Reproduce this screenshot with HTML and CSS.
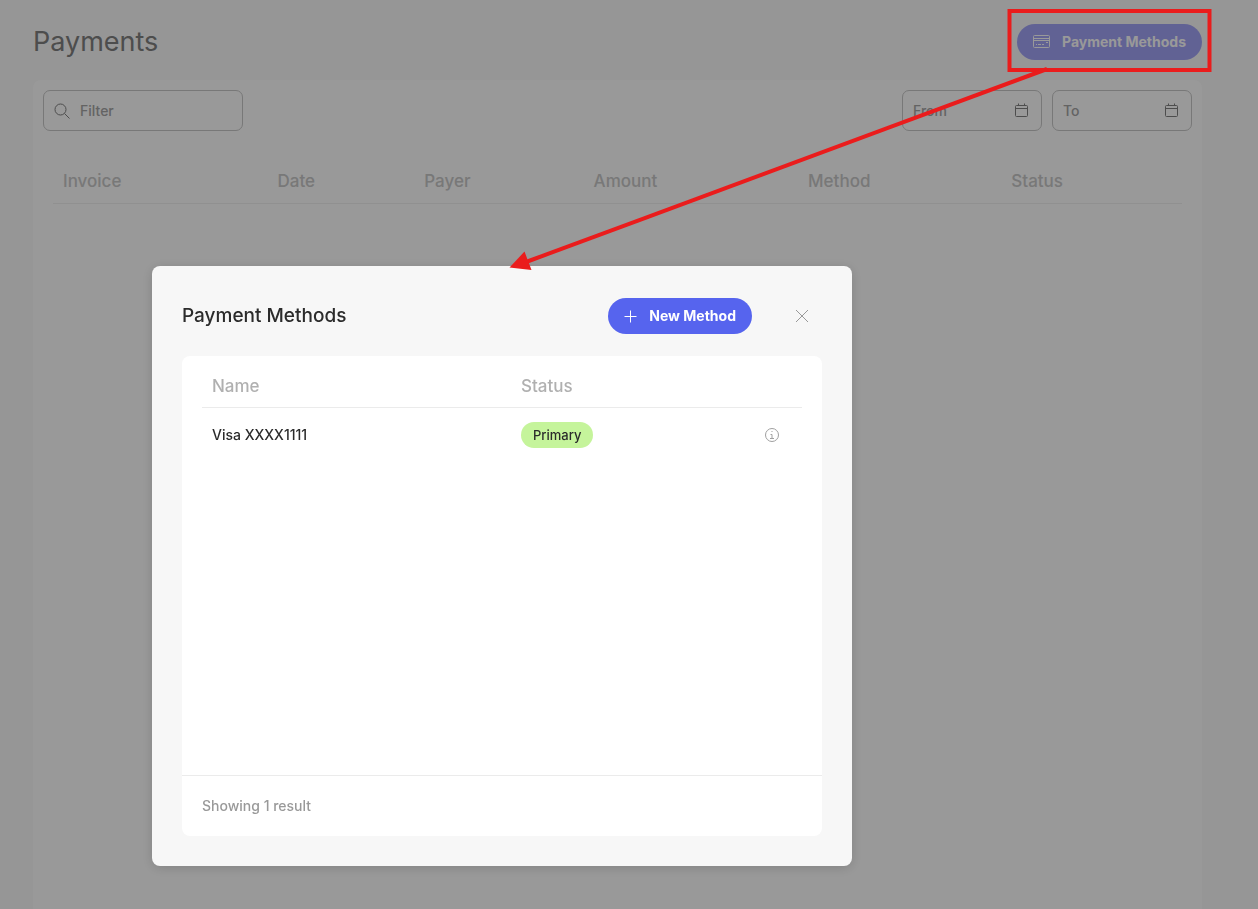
FILE: index.html
```html
<!DOCTYPE html>
<html lang="en">
  <head>
    <meta charset="utf-8">
    <meta name="viewport" content="width=device-width, initial-scale=1">
    <title>Payments</title>
    <link rel="stylesheet" href="styles.css">
  </head>
  <body>
    <main class="page">
      <header class="page-header">
        <h1>Payments</h1>
        <button type="button" class="btn btn-muted">
          <svg class="icon-card" viewBox="0 0 17 14" fill="none" stroke="currentColor">
            <rect x=".5" y=".5" width="16" height="12" rx="1" />
            <path d="M.5 3.500h16M.5 5.500h16M3 9.500h1M5 9.500h3M9 9.500h2M13 7.500h2" />
          </svg>
          Payment Methods
        </button>
      </header>

      <section class="card payments">
        <div class="filters">
          <label class="field field-search">
            <svg class="icon-search" viewBox="0 0 16 16" fill="none" stroke="currentColor">
              <circle cx="6.5" cy="6.5" r="5.5" />
              <path d="M10.5 10.5 15.5 15.5" />
            </svg>
            <input type="text" placeholder="Filter" aria-label="Filter">
          </label>
          <div class="dates">
            <label class="field field-date">
              <input type="text" placeholder="From" aria-label="From">
              <svg class="icon-calendar" viewBox="0 0 14 15" fill="none" stroke="currentColor">
                <rect x=".5" y="2.5" width="12" height="11" rx="1" />
                <path d="M.5 5.5h12M3.5 .5v2M9.500 .5v2" />
              </svg>
            </label>
            <label class="field field-date">
              <input type="text" placeholder="To" aria-label="To">
              <svg class="icon-calendar" viewBox="0 0 14 15" fill="none" stroke="currentColor">
                <rect x=".5" y="2.5" width="12" height="11" rx="1" />
                <path d="M.5 5.5h12M3.5 .5v2M9.500 .5v2" />
              </svg>
            </label>
          </div>
        </div>
        <div class="table-wrap">
          <table class="payments-table">
            <thead>
              <tr>
                <th class="col-invoice">Invoice</th>
                <th class="col-date">Date</th>
                <th class="col-payer">Payer</th>
                <th class="col-amount">Amount</th>
                <th class="col-method">Method</th>
                <th>Status</th>
              </tr>
            </thead>
          </table>
        </div>
      </section>
    </main>

    <!-- Modal -->
    <div class="overlay">
      <div class="modal" role="dialog" aria-labelledby="modal-title">
        <div class="modal-header">
          <h2 id="modal-title">Payment Methods</h2>
          <button type="button" class="btn btn-primary">
            <svg class="icon-plus" viewBox="0 0 13 13" fill="none" stroke="currentColor">
              <path d="M6.5 .5v12M.5 6.5h12" />
            </svg>
            New Method
          </button>
          <button type="button" class="btn-close" aria-label="Close">
            <svg viewBox="0 0 14 14" fill="none" stroke="currentColor">
              <path d="M1 1l12 12M13 1L1 13" />
            </svg>
          </button>
        </div>
        <div class="card methods">
          <table class="methods-table">
            <thead>
              <tr>
                <th class="col-name">Name</th>
                <th>Status</th>
                <th class="col-info"></th>
              </tr>
            </thead>
            <tbody>
              <tr>
                <td>Visa XXXX1111</td>
                <td><span class="badge">Primary</span></td>
                <td>
                  <button type="button" class="btn-info" aria-label="Info">
                    <svg viewBox="0 0 16 16" fill="none" stroke="currentColor">
                      <circle cx="8" cy="8" r="6.5" />
                      <path d="M6.5 7.5h1.5v4M6 11.5h4M7.5 4.5h1" />
                    </svg>
                  </button>
                </td>
              </tr>
            </tbody>
          </table>
          <footer class="methods-footer">Showing 1 result</footer>
        </div>
      </div>
    </div>

    <!-- Callout drawn over everything -->
    <svg class="callout" width="1258" height="300" viewBox="0 0 1258 300">
      <rect x="1009.5" y="11" width="200" height="59" fill="none" stroke="#ea1c1c" stroke-width="4" />
      <path d="M1047 69 526 262" stroke="#ea1c1c" stroke-width="4" />
      <path d="M509.5 267.500 524.5 251.5 531.5 270z" fill="#ea1c1c" />
    </svg>
  </body>
</html>
```
FILE: styles.css
```css
* {
  box-sizing: border-box;
}
html,
body {
  height: 100%;
}
body {
  margin: 0;
  background-color: #fafafa;
  color: #2b2b2b;
  font-family: Inter, "Liberation Sans", sans-serif;
  font-size: 14px;
  line-height: 20px;
  overflow: hidden;
}
h1,
h2 {
  margin: 0;
  font-weight: 400;
}
h1 {
  font-size: 27px;
  line-height: 36px;
  color: #808080;
}
h2 {
  flex: 1;
  font-size: 19px;
  line-height: 28px;
  font-weight: 500;
}
button,
input {
  font: inherit;
  color: inherit;
}
button {
  border: none;
  background: none;
  padding: 0;
  cursor: pointer;
}
svg {
  display: block;
}
.page {
  display: flex;
  flex-direction: column;
  min-height: 100%;
  padding: 24px 56px 0 33px;
}
.page-header {
  display: flex;
  justify-content: space-between;
  align-items: center;
  margin-bottom: 20px;
}
.card {
  background-color: #fff;
  border-radius: 8px;
}
.btn {
  display: flex;
  align-items: center;
  gap: 12px;
  height: 36px;
  padding: 0 16px;
  border-radius: 18px;
  color: #fff;
  font-size: 14px;
  font-weight: 700;
}
.btn-muted {
  background-color: #a2a3f7;
}
.btn-primary {
  background-color: #5664ee;
}
.icon-card {
  width: 17px;
  height: 14px;
}
.icon-plus {
  width: 13px;
  height: 13px;
}

/* Payments list */
.payments {
  flex: 1;
  padding: 10px;
  border-radius: 8px 8px 0 0;
}
.filters,
.dates {
  display: flex;
  justify-content: space-between;
  gap: 10px;
}
.field {
  display: flex;
  align-items: center;
  gap: 10px;
  height: 41px;
  padding: 0 10px;
  border: 1px solid #c8c8c8;
  border-radius: 7px;
  color: #808080;
}
.field-search {
  width: 200px;
}
.field-date {
  width: 140px;
  padding-right: 12px;
}
.field input {
  flex: 1;
  min-width: 0;
  padding: 0;
  border: none;
  outline: none;
  background: none;
  font-weight: 500;
}
.field input::placeholder {
  color: #a6a6a6;
  opacity: 1;
}
.icon-search {
  width: 16px;
  height: 16px;
}
.icon-calendar {
  width: 14px;
  height: 15px;
}
table {
  width: 100%;
  border-collapse: collapse;
  table-layout: fixed;
}
th,
td {
  padding: 0 10px;
  text-align: left;
}
th {
  border-bottom: 1px solid #ebebeb;
  color: #b0b0b0;
  font-size: 17px;
  font-weight: 500;
}
.table-wrap {
  padding: 28px 10px 0;
}
.payments-table th {
  height: 44px;
  border-color: #f0f0f0;
  color: #c8c8c8;
}
.col-invoice {
  width: 19%;
}
.col-date {
  width: 13%;
}
.col-payer {
  width: 15%;
}
.col-amount {
  width: 19%;
}
.col-method {
  width: 18%;
}

/* Payment methods modal */
.overlay {
  position: fixed;
  inset: 0;
  padding: 266px 152px 0;
  background-color: rgba(0, 0, 0, 0.4);
}
.modal {
  max-width: 700px;
  padding: 30px;
  border-radius: 8px;
  background-color: #f7f7f7;
  box-shadow: 0 2px 12px rgba(0, 0, 0, 0.15);
}
.modal-header {
  display: flex;
  align-items: center;
  height: 40px;
  margin-bottom: 20px;
}
.btn-close {
  display: flex;
  justify-content: center;
  align-items: center;
  width: 40px;
  height: 40px;
  margin-left: 30px;
  color: #999;
}
.btn-close svg {
  width: 14px;
  height: 14px;
}
.methods {
  display: flex;
  flex-direction: column;
  justify-content: space-between;
  min-height: 480px;
  padding-top: 10px;
}
.methods-table {
  width: auto;
  margin: 0 20px;
}
.methods-table th {
  height: 41px;
}
.methods-table td {
  height: 56px;
  font-weight: 500;
}
.col-name {
  width: 309px;
}
.col-info {
  width: 60px;
}
.badge {
  display: inline-block;
  padding: 3px 12px;
  border-radius: 13px;
  background-color: #c5f49b;
  font-size: 13px;
}
.btn-info {
  display: flex;
  justify-content: center;
  width: 40px;
  color: #a0a0a0;
}
.btn-info svg {
  width: 16px;
  height: 16px;
}
.methods-footer {
  padding: 20px;
  border-top: 1px solid #ebebeb;
  color: #999;
  font-weight: 500;
}
.callout {
  position: absolute;
  top: 0;
  left: 0;
  pointer-events: none;
}
```
